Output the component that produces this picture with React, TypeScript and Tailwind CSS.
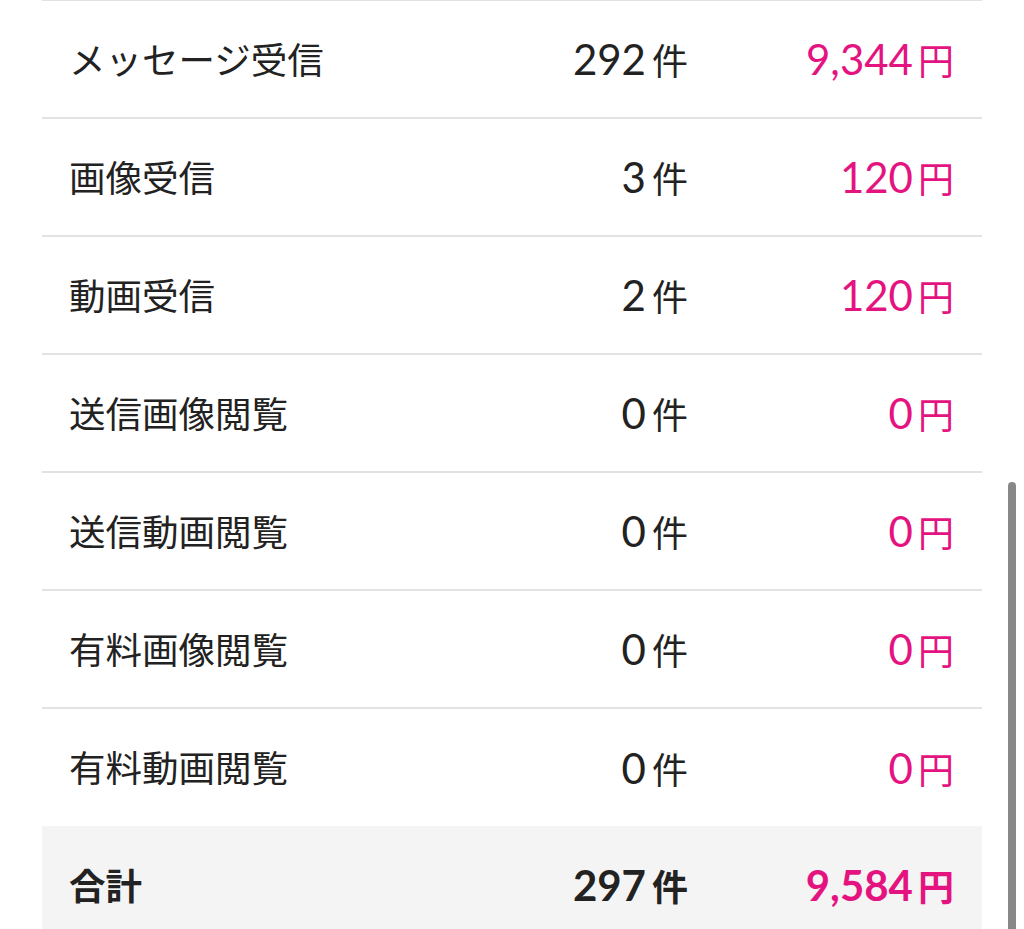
import React from "react";

const rows = [
  { label: "メッセージ受信", count: "292", amount: "9,344" },
  { label: "画像受信", count: "3", amount: "120" },
  { label: "動画受信", count: "2", amount: "120" },
  { label: "送信画像閲覧", count: "0", amount: "0" },
  { label: "送信動画閲覧", count: "0", amount: "0" },
  { label: "有料画像閲覧", count: "0", amount: "0" },
  { label: "有料動画閲覧", count: "0", amount: "0" },
];

const jp = "font-['Noto_Sans_CJK_JP',sans-serif]";
const num = "font-['Lato','Noto_Sans_CJK_JP',sans-serif]";

function Row({ label, count, amount, last, total }: { label: string; count: string; amount: string; last?: boolean; total?: boolean }) {
  return (
    <div
      className={
        "flex items-center pl-[27px] pr-[28px] " +
        (total ? "h-[118px] bg-[#f4f4f4] font-bold" : last ? "h-[117px]" : "h-[118px] border-b-2 border-[#e2e2e2]")
      }
    >
      <div className={`flex-1 text-[36.5px] leading-none text-[#222] ${jp} ${total ? "font-bold" : "font-normal"}`}>{label}</div>
      <div className="w-[240px] flex items-baseline justify-end text-[#222]">
        <span className={`text-[42px] leading-none ${num} ${total ? "font-bold" : "font-normal"}`}>{count}</span>
        <span className={`ml-[6px] text-[36px] leading-none ${jp} ${total ? "font-bold" : "font-normal"}`}>件</span>
      </div>
      <div className="w-[266px] flex items-baseline justify-end text-[#e4137f]">
        <span className={`text-[42px] leading-none ${num} ${total ? "font-bold" : "font-normal"}`}>{amount}</span>
        <span className={`ml-[5px] text-[36px] leading-none ${jp} ${total ? "font-bold" : "font-normal"}`}>円</span>
      </div>
    </div>
  );
}

export default function App() {
  return (
    <div className="relative h-[929px] w-[1024px] overflow-hidden bg-white">
      <div className="mx-[42px] border-t-[1px] border-[#e2e2e2]">
        {rows.map((r, i) => (
          <Row key={i} {...r} last={i === rows.length - 1} />
        ))}
        <Row label="合計" count="297" amount="9,584" total />
      </div>
      <div className="absolute left-[1008px] top-[482px] h-[460px] w-[8px] rounded-full bg-[#888888]" />
    </div>
  );
}
